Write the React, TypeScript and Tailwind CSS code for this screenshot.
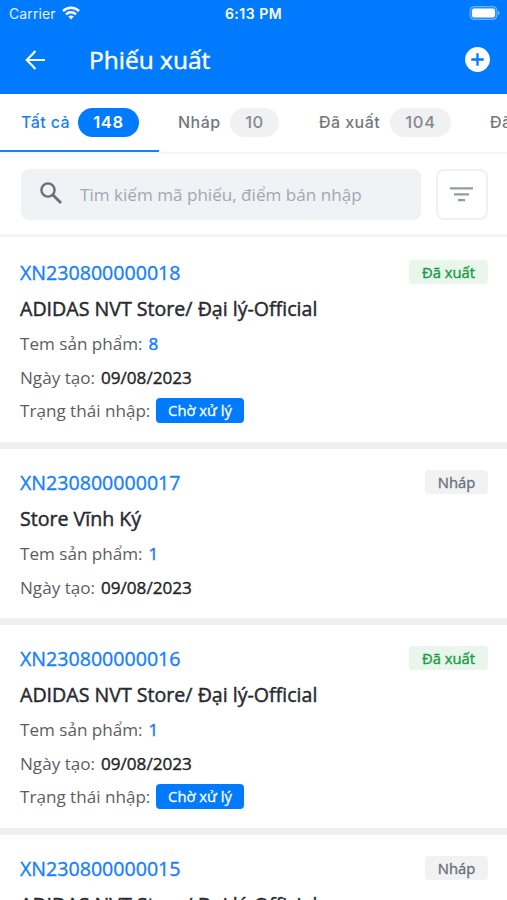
import React from 'react';

type Order = {
  code: string;
  store: string;
  stamps: number;
  date: string;
  exported: boolean;
};

const orders: Order[] = [
  { code: 'XN230800000018', store: 'ADIDAS NVT Store/ Đại lý-Official', stamps: 8, date: '09/08/2023', exported: true },
  { code: 'XN230800000017', store: 'Store Vĩnh Ký', stamps: 1, date: '09/08/2023', exported: false },
  { code: 'XN230800000016', store: 'ADIDAS NVT Store/ Đại lý-Official', stamps: 1, date: '09/08/2023', exported: true },
  { code: 'XN230800000015', store: 'ADIDAS NVT Store/ Đại lý-Official', stamps: 1, date: '09/08/2023', exported: false },
];

function StatusBar() {
  return (
    <div className="flex h-7 items-center justify-between pl-[9px] pr-[7px] font-['Inter',sans-serif] text-white">
      <div className="flex w-[120px] items-center gap-1.5 pb-0.5">
        <span className="text-[14px] tracking-[0.1px] opacity-90">Carrier</span>
        <svg width="18" height="14" viewBox="0 0 18 14" fill="none" stroke="currentColor" strokeWidth="2.4">
          <path d="M1 5.1C5.5.7 12.5.7 17 5.1" />
          <path d="M4 8.3C6.8 5.6 11.2 5.6 14 8.3" />
          <path d="M9 13.5 6.2 10.6c1.6-1.4 4-1.4 5.6 0Z" fill="currentColor" stroke="none" />
        </svg>
      </div>
      <span className="pb-0.5 text-[14px] font-semibold tracking-[0.5px]">6:13 PM</span>
      <div className="flex w-[122px] justify-end pb-0.5">
        <svg width="31" height="14" viewBox="0 0 31 14">
          <rect x="1" y=".5" width="27" height="13" rx="4" fill="white" fillOpacity=".15" stroke="white" strokeOpacity=".4" />
          <rect x="3" y="2.5" width="23" height="9" rx="2" fill="white" />
          <path d="M29 4.7c2 .8 2 3.8 0 4.6Z" fill="white" fillOpacity=".45" />
        </svg>
      </div>
    </div>
  );
}

function Header() {
  return (
    <div className="flex h-[66px] items-center pb-[3px] pl-[25px] pr-[17px] text-white">
      <svg width="21" height="20" viewBox="0 0 21 20" fill="none" stroke="currentColor" strokeWidth="2.1">
        <path d="M20 10H2M10.5 1 1.7 10l8.8 9" />
      </svg>
      <h1 className="ml-[43px] text-[24.5px] leading-8 [-webkit-text-stroke:0.45px]">Phiếu xuất</h1>
      <svg className="ml-auto" width="25" height="25" viewBox="0 0 25 25">
        <circle cx="12.5" cy="12.5" r="12.4" fill="white" />
        <path d="M12.5 6.3v12.4M6.3 12.5h12.4" stroke="#007aff" strokeWidth="2.3" />
      </svg>
    </div>
  );
}

function Tabs() {
  return (
    <div className="flex h-[60px] w-full shrink-0 overflow-hidden border-b-2 border-[#f5f6f7] font-['Inter',sans-serif] text-[16px] font-medium tracking-[0.45px] text-[#74777c]">
      <div className="-mb-0.5 flex h-[59px] w-[159px] shrink-0 items-center gap-2 border-b-[3px] border-[#1780fb] pl-[21px] text-[#1780fb]">
        <span className="w-[49px] whitespace-nowrap tracking-[0.4px]">Tất cả</span>
        <span className="flex h-[29px] w-[61px] items-center justify-center rounded-full bg-[#007aff] pt-px text-[16.5px] font-semibold tracking-[0.7px] text-white">148</span>
      </div>
      <div className="flex h-14 shrink-0 items-center pl-[19px]">
        <span className="w-[52px] whitespace-nowrap">Nháp</span>
        <span className="flex h-[29px] w-[49px] items-center justify-center rounded-full bg-[#f0f1f2] pt-px text-[16.5px] text-[#85898f]">10</span>
      </div>
      <div className="flex h-14 shrink-0 items-center pl-10">
        <span className="w-[71px] whitespace-nowrap">Đã xuất</span>
        <span className="flex h-[29px] w-[61px] items-center justify-center rounded-full bg-[#f0f1f2] pt-px text-[16.5px] tracking-[0.8px] text-[#85898f]">104</span>
      </div>
      <div className="flex h-14 shrink-0 items-center whitespace-nowrap pl-[39px]">Đã</div>
    </div>
  );
}

function SearchBar() {
  return (
    <div className="flex h-[83px] w-full shrink-0 items-center gap-[15px] border-b-[3px] border-[#f3f4f5] pl-[21px] pr-[19px]">
      <div className="flex h-[51px] w-[400px] items-center rounded-lg bg-[#f0f2f6] pl-[19px]">
        <svg className="-mt-0.5" width="22" height="22" viewBox="0 0 22 22" fill="none" stroke="#6b7077" strokeWidth="2.4">
          <circle cx="8" cy="8" r="6.6" />
          <path d="m13 13 8 8" strokeWidth="2.8" />
        </svg>
        <span className="ml-[18px] whitespace-nowrap pt-0.5 text-[17.1px] text-[#a1a8b3]">Tìm kiếm mã phiếu, điểm bán nhập</span>
      </div>
      <div className="flex h-[51px] w-[52px] items-center justify-center rounded-lg border-2 border-[#eff0f2] pr-0.5">
        <svg width="23" height="15" viewBox="0 0 23 15" stroke="#9699a6" strokeWidth="2.3">
          <path d="M0 1.3h23M4 7.3h15M8 13.1h7" />
        </svg>
      </div>
    </div>
  );
}

function OrderCard({ order }: { order: Order }) {
  return (
    <div className={`shrink-0 border-b-[7px] border-[#eff0f1] pl-5 pr-[19px] pt-5 ${order.exported ? 'h-[210px]' : 'h-[176px]'}`}>
      <div className="flex h-7 items-center justify-between">
        <span className="text-[19.6px] text-[#1780fb] [-webkit-text-stroke:0.35px]">{order.code}</span>
        {order.exported ? (
          <span className="-mt-0.5 flex h-6 w-[79px] items-center justify-center rounded bg-[#e8f6ec] text-[14.8px] text-[#1a9c46] [-webkit-text-stroke:0.4px]">Đã xuất</span>
        ) : (
          <span className="-mt-0.5 flex h-6 w-[63px] items-center justify-center rounded bg-[#f1f2f4] text-[14.8px] text-[#6a6f7c] [-webkit-text-stroke:0.35px]">Nháp</span>
        )}
      </div>
      <div className="mt-2 flex h-7 items-center whitespace-nowrap text-[19.6px] text-[#292b2f] [-webkit-text-stroke:0.45px]">{order.store}</div>
      <div className="mt-1 flex h-[34px] items-center text-[17.1px] text-[#5b5e62]">
        Tem sản phẩm:<span className="ml-1.5 text-[#1780fb] [-webkit-text-stroke:0.5px]">{order.stamps}</span>
      </div>
      <div className="flex h-[33px] items-center text-[17.1px] text-[#5b5e62]">
        Ngày tạo:<span className="ml-1.5 text-[#242528] [-webkit-text-stroke:0.4px]">{order.date}</span>
      </div>
      {order.exported && (
        <div className="flex h-[33px] items-center text-[17.1px] text-[#5b5e62]">
          <span className="w-[136px] whitespace-nowrap">Trạng thái nhập:</span>
          <span className="flex h-[25px] w-[88px] items-center justify-center rounded bg-[#007aff] text-[14.8px] text-white [-webkit-text-stroke:0.3px]">Chờ xử lý</span>
        </div>
      )}
    </div>
  );
}

export default function App() {
  return (
    <main className="flex h-[900px] w-[507px] flex-col overflow-hidden bg-white font-['Open_Sans','Noto_Sans',sans-serif]">
      <header className="h-[94px] shrink-0 bg-[#007aff]">
        <StatusBar />
        <Header />
      </header>
      <Tabs />
      <SearchBar />
      <section className="flex flex-col pt-0.5">
        {orders.map((order) => (
          <OrderCard key={order.code} order={order} />
        ))}
      </section>
    </main>
  );
}
